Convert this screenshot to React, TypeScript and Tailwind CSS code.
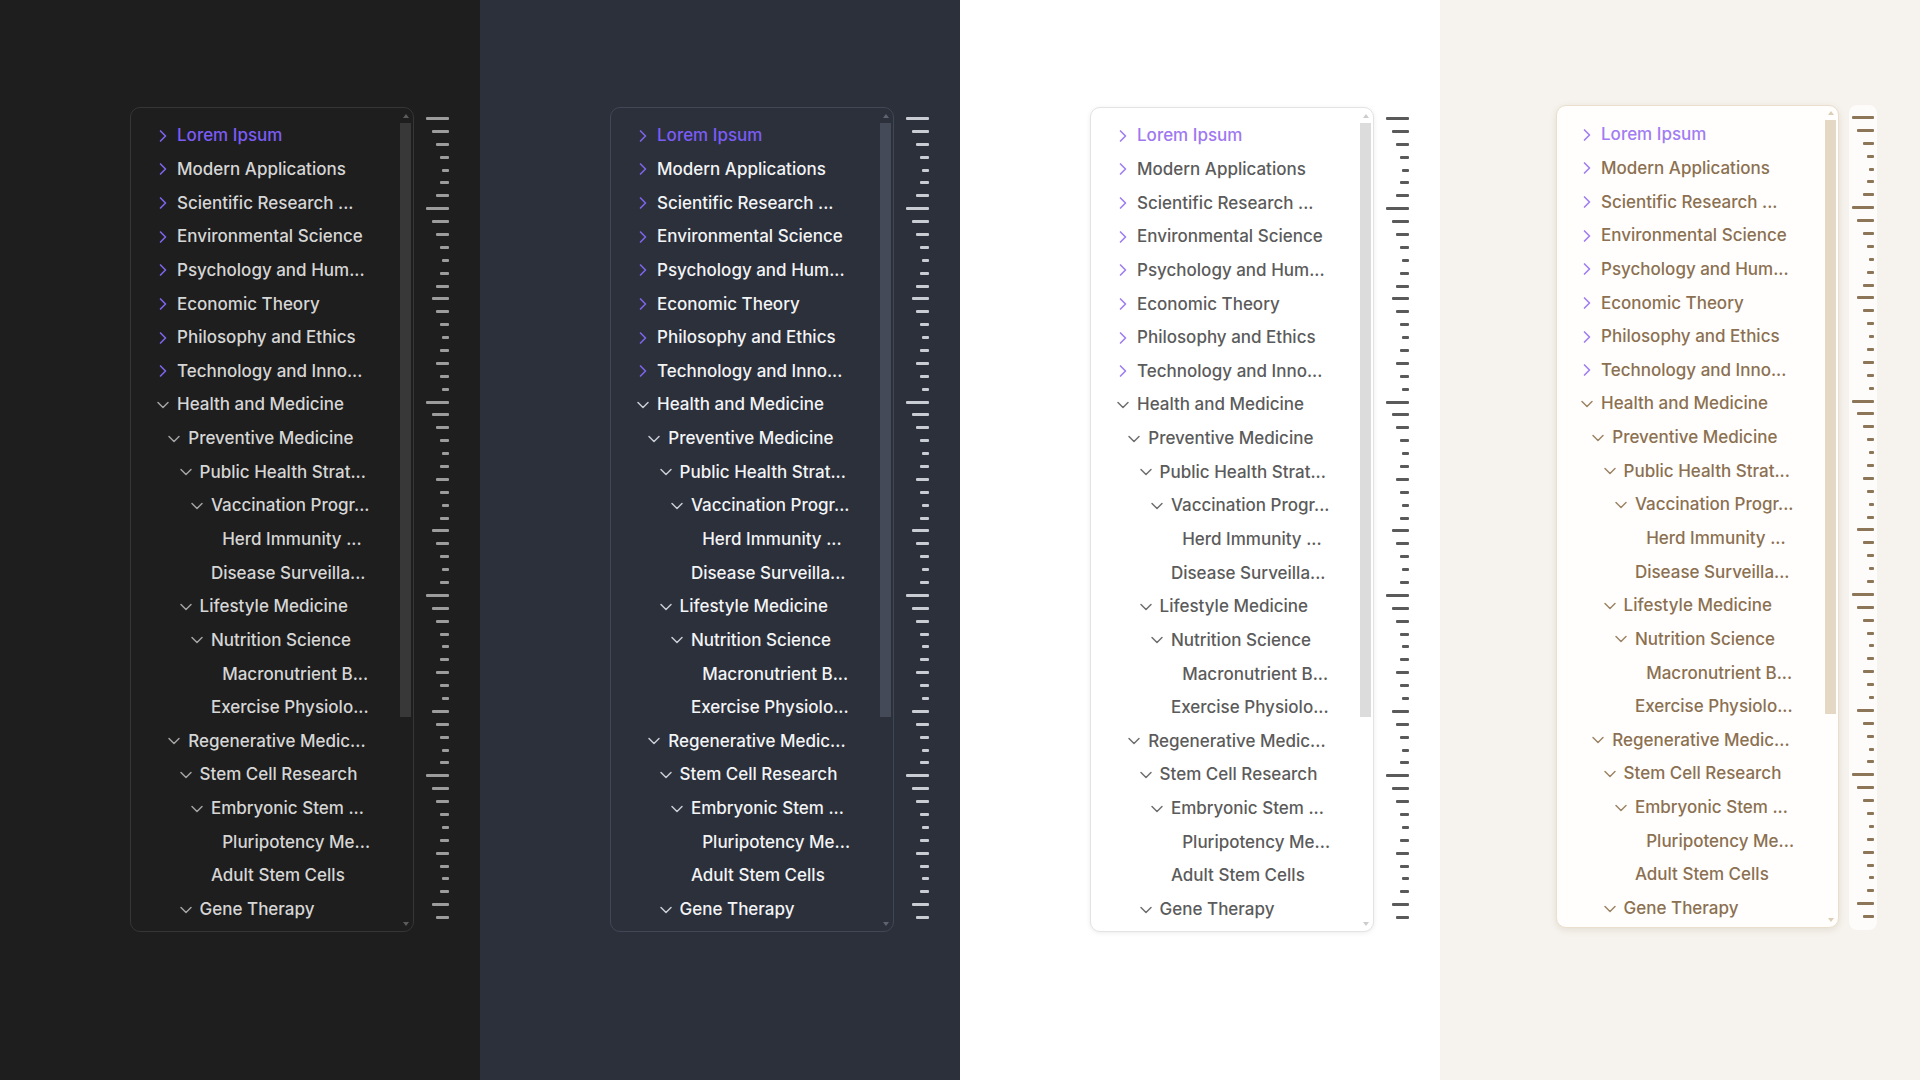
import { ChevronDown, ChevronRight } from "lucide-react";

type Kind = "closed" | "open" | "leaf";

type Item = { label: string; level: number; kind: Kind; active?: boolean };

const items: Item[] = [
  { label: "Lorem Ipsum", level: 0, kind: "closed", active: true },
  { label: "Modern Applications", level: 0, kind: "closed" },
  { label: "Scientific Research ...", level: 0, kind: "closed" },
  { label: "Environmental Science", level: 0, kind: "closed" },
  { label: "Psychology and Hum...", level: 0, kind: "closed" },
  { label: "Economic Theory", level: 0, kind: "closed" },
  { label: "Philosophy and Ethics", level: 0, kind: "closed" },
  { label: "Technology and Inno...", level: 0, kind: "closed" },
  { label: "Health and Medicine", level: 0, kind: "open" },
  { label: "Preventive Medicine", level: 1, kind: "open" },
  { label: "Public Health Strat...", level: 2, kind: "open" },
  { label: "Vaccination Progr...", level: 3, kind: "open" },
  { label: "Herd Immunity ...", level: 4, kind: "leaf" },
  { label: "Disease Surveilla...", level: 3, kind: "leaf" },
  { label: "Lifestyle Medicine", level: 2, kind: "open" },
  { label: "Nutrition Science", level: 3, kind: "open" },
  { label: "Macronutrient B...", level: 4, kind: "leaf" },
  { label: "Exercise Physiolo...", level: 3, kind: "leaf" },
  { label: "Regenerative Medic...", level: 1, kind: "open" },
  { label: "Stem Cell Research", level: 2, kind: "open" },
  { label: "Embryonic Stem ...", level: 3, kind: "open" },
  { label: "Pluripotency Me...", level: 4, kind: "leaf" },
  { label: "Adult Stem Cells", level: 3, kind: "leaf" },
  { label: "Gene Therapy", level: 2, kind: "open" },
];

const indent = ["ml-0", "ml-[11.3px]", "ml-[22.6px]", "ml-[33.9px]", "ml-[45.2px]"];

// minimap ticks, one letter per heading depth
const ticks = "LabcdcbLabcdcbabcdcbcdLabcdcbcdcabcdcLabcdcbcdabcdcLabcdcbcdcab".split("");

type Theme = {
  page: string;
  wrap: string;
  panel: string;
  list: string;
  rowPad: string;
  text: string;
  active: string;
  chevron: string;
  open: string;
  thumb: string;
  arrowUp: string;
  arrowDown: string;
  arrowBox: string;
  tickCol: string;
  tick: string;
  tickW: Record<string, string>;
};

const darkW = { L: "w-[23px]", a: "w-[17px]", b: "w-[13px]", c: "w-[9px]", d: "w-[7px]" };

const themes: Theme[] = [
  {
    page: "bg-[#1e1e1e]",
    wrap: "pl-[130px] pt-[107px] gap-[11px]",
    panel: "h-[825px] w-[284px] bg-[#1e1e1e] border-[#363636]",
    list: "pt-[11px]",
    rowPad: "pl-[22px]",
    text: "text-[#d6d6d6]",
    active: "text-[#7b5cf6]",
    chevron: "text-[#7e63ea]",
    open: "text-[#a3a3a3]",
    thumb: "bg-[#383838]",
    arrowUp: "border-b-[#5c5c5c]",
    arrowDown: "border-t-[#5c5c5c]",
    arrowBox: "h-[15px]",
    tickCol: "w-[24px] h-[825px] pt-[5px]",
    tick: "bg-[#9c9c9c]",
    tickW: darkW,
  },
  {
    page: "bg-[#2b303b]",
    wrap: "pl-[130px] pt-[107px] gap-[11px]",
    panel: "h-[825px] w-[284px] bg-[#2b303b] border-[#414756]",
    list: "pt-[11px]",
    rowPad: "pl-[22px]",
    text: "text-[#f3f4f6]",
    active: "text-[#7b5cf6]",
    chevron: "text-[#7e63ea]",
    open: "text-[#c9ccd3]",
    thumb: "bg-[#444a58]",
    arrowUp: "border-b-[#5d6372]",
    arrowDown: "border-t-[#5d6372]",
    arrowBox: "h-[15px]",
    tickCol: "w-[24px] h-[825px] pt-[5px]",
    tick: "bg-[#c9ccd2]",
    tickW: darkW,
  },
  {
    page: "bg-white",
    wrap: "pl-[130px] pt-[107px] gap-[11px]",
    panel:
      "h-[825px] w-[284px] bg-white border-[#e3e3e3] shadow-[0_1px_5px_rgba(0,0,0,0.08)]",
    list: "pt-[11px]",
    rowPad: "pl-[22px]",
    text: "text-[#5b5b5b]",
    active: "text-[#9f78f0]",
    chevron: "text-[#9f7ef4]",
    open: "text-[#6f6f6f]",
    thumb: "bg-[#dcdcdc]",
    arrowUp: "border-b-[#cccccc]",
    arrowDown: "border-t-[#cccccc]",
    arrowBox: "h-[15px]",
    tickCol: "w-[24px] h-[825px] pt-[5px]",
    tick: "bg-[#5a5a5a]",
    tickW: darkW,
  },
  {
    page: "bg-[#f6f3ee]",
    wrap: "pl-[116px] pt-[105px] gap-[10px]",
    panel:
      "h-[823px] w-[283px] bg-[#fffefc] border-[#eadfcd] shadow-[0_2px_7px_rgba(120,90,50,0.14)]",
    list: "pt-[12px]",
    rowPad: "pl-[20px]",
    text: "text-[#8b7051]",
    active: "text-[#a17cf2]",
    chevron: "text-[#a07ef4]",
    open: "text-[#9c8567]",
    thumb: "bg-[#e4d7c4]",
    arrowUp: "border-b-[#dccdb6]",
    arrowDown: "border-t-[#dccdb6]",
    arrowBox: "h-[14px]",
    tickCol: "w-[28px] h-[825px] pt-[6px] pr-[3px] rounded-lg bg-[#fdfcfa]",
    tick: "bg-[#8d7557]",
    tickW: { L: "w-[22px]", a: "w-[17px]", b: "w-[11px]", c: "w-[7px]", d: "w-[5px]" },
  },
];

function Row({ item, t }: { item: Item; t: Theme }) {
  return (
    <div className={`flex h-[33.65px] items-center gap-1 ${t.rowPad}`}>
      <div className={`flex items-center gap-1 ${indent[item.level]}`}>
        <span className="flex w-5 justify-center">
          {item.kind === "closed" && (
            <ChevronRight size={20} strokeWidth={2} className={t.chevron} />
          )}
          {item.kind === "open" && (
            <ChevronDown size={20} strokeWidth={1.8} className={t.open} />
          )}
        </span>
        <span
          className={`whitespace-nowrap text-[17px] font-medium leading-none ${
            item.active ? t.active : t.text
          }`}
        >
          {item.label}
        </span>
      </div>
    </div>
  );
}

function Outline({ t }: { t: Theme }) {
  return (
    <div className={`flex h-screen w-[480px] shrink-0 items-start ${t.page} ${t.wrap}`}>
      <div className={`flex overflow-hidden rounded-[10px] border ${t.panel}`}>
        <div className={`min-w-0 flex-1 overflow-hidden ${t.list}`}>
          {items.map((item) => (
            <Row key={item.label} item={item} t={t} />
          ))}
        </div>
        <div className="mr-[2px] flex w-[11px] flex-col">
          <div className={`flex items-center justify-center ${t.arrowBox}`}>
            <span
              className={`h-0 w-0 border-x-[3.5px] border-b-[4px] border-x-transparent ${t.arrowUp}`}
            />
          </div>
          <div className={`h-[594px] ${t.thumb}`} />
          <div className="flex-1" />
          <div className={`flex items-center justify-center ${t.arrowBox}`}>
            <span
              className={`h-0 w-0 border-x-[3.5px] border-t-[4px] border-x-transparent ${t.arrowDown}`}
            />
          </div>
        </div>
      </div>
      <div className={`flex shrink-0 flex-col ${t.tickCol}`}>
        {ticks.map((k, i) => (
          <div key={i} className="flex h-[12.9px] items-center justify-end">
            <div className={`h-[3px] rounded-[1px] ${t.tick} ${t.tickW[k]}`} />
          </div>
        ))}
      </div>
    </div>
  );
}

export default function App() {
  return (
    <div className="flex h-screen w-[1920px] overflow-hidden font-['Inter',sans-serif]">
      {themes.map((t, i) => (
        <Outline key={i} t={t} />
      ))}
    </div>
  );
}
